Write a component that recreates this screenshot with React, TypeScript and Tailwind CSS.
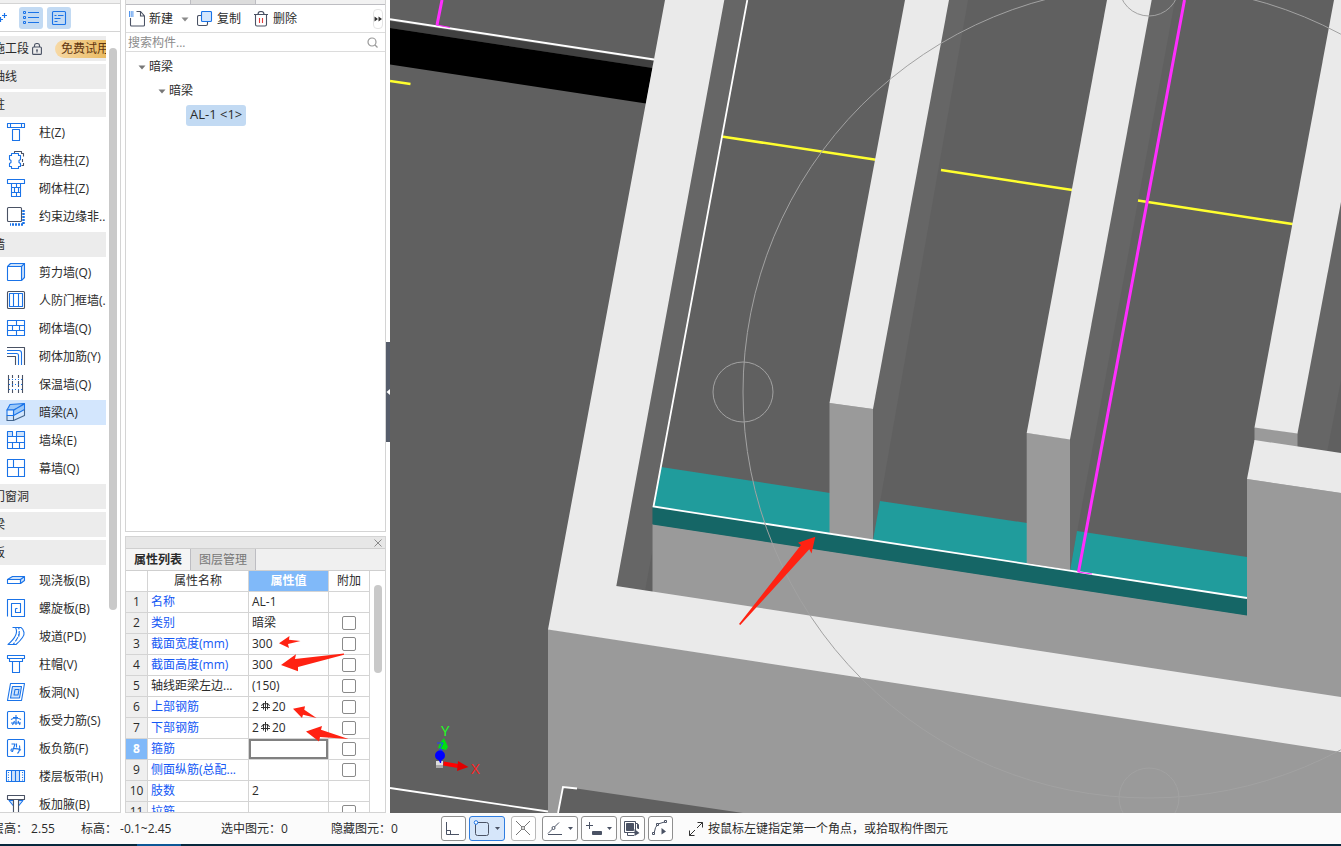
import React from 'react';
import clsx from 'clsx';

type IconName =
  | 'column' | 'tieColumn' | 'brickColumn' | 'edgeColumn'
  | 'shearWall' | 'doorFrameWall' | 'brickWall' | 'wallRebar' | 'insulation'
  | 'hiddenBeam' | 'buttress' | 'curtainWall'
  | 'slab' | 'spiralSlab' | 'ramp' | 'columnCap' | 'slabHole'
  | 'mainRebar' | 'negativeRebar' | 'slabStrip' | 'haunch';

type MenuRow = { label: string; icon?: IconName; badge?: string; active?: boolean };

const MENU: MenuRow[] = [
  { label: '施工段', badge: '免费试用' },
  { label: '轴线' },
  { label: '柱' },
  { label: '柱(Z)', icon: 'column' },
  { label: '构造柱(Z)', icon: 'tieColumn' },
  { label: '砌体柱(Z)', icon: 'brickColumn' },
  { label: '约束边缘非..', icon: 'edgeColumn' },
  { label: '墙' },
  { label: '剪力墙(Q)', icon: 'shearWall' },
  { label: '人防门框墙(.', icon: 'doorFrameWall' },
  { label: '砌体墙(Q)', icon: 'brickWall' },
  { label: '砌体加筋(Y)', icon: 'wallRebar' },
  { label: '保温墙(Q)', icon: 'insulation' },
  { label: '暗梁(A)', icon: 'hiddenBeam', active: true },
  { label: '墙垛(E)', icon: 'buttress' },
  { label: '幕墙(Q)', icon: 'curtainWall' },
  { label: '门窗洞' },
  { label: '梁' },
  { label: '板' },
  { label: '现浇板(B)', icon: 'slab' },
  { label: '螺旋板(B)', icon: 'spiralSlab' },
  { label: '坡道(PD)', icon: 'ramp' },
  { label: '柱帽(V)', icon: 'columnCap' },
  { label: '板洞(N)', icon: 'slabHole' },
  { label: '板受力筋(S)', icon: 'mainRebar' },
  { label: '板负筋(F)', icon: 'negativeRebar' },
  { label: '楼层板带(H)', icon: 'slabStrip' },
  { label: '板加腋(B)', icon: 'haunch' },
];

type PropRow = { name: string; value: string; check?: boolean; plain?: boolean; rebar?: boolean; editing?: boolean };

const PROPS: PropRow[] = [
  { name: '名称', value: 'AL-1' },
  { name: '类别', value: '暗梁', check: true },
  { name: '截面宽度(mm)', value: '300', check: true },
  { name: '截面高度(mm)', value: '300', check: true },
  { name: '轴线距梁左边...', value: '(150)', check: true, plain: true },
  { name: '上部钢筋', value: '20', check: true, rebar: true },
  { name: '下部钢筋', value: '20', check: true, rebar: true },
  { name: '箍筋', value: '', check: true, editing: true },
  { name: '侧面纵筋(总配...', value: '', check: true },
  { name: '肢数', value: '2' },
  { name: '拉筋', value: '', check: true },
];

const B = '#1a73e8';
const D = '#4a5264';
const L = '#cfe3fb';

const ICONS: Record<IconName, React.ReactNode> = {
  column: <path d="M.5 .5h17v4H.5z M3.500 1v3 M14.500 1v3 M5.500 6.500v11h7v-11z" />,
  tieColumn: (
    <>
      <path d="M7.500 2V.5h7v2h2v3 M15.500 8v3 M16.500 12v2.500h-2" stroke={D} />
      <path d="M4.500 2.500h7v2h2v4l-1.500 1v2l1.500 1v3h-2v2h-7v-2h-2v-3l1.500-1v-2l-1.500-1v-4h2z" />
    </>
  ),
  brickColumn: <path d="M.5 .5h17v4H.5z M4.500 4.500v13h9v-13 M4.500 8.500h9 M4.500 13.500h9 M9.500 5v3.500 M7.500 8.500v5 M11.500 8.500v5 M9.500 13.500v4" />,
  edgeColumn: (
    <>
      <path d="M16.500 3v14.500H3" strokeDasharray="2 1" strokeWidth="2.500" />
      <rect x=".5" y=".5" width="14" height="14" rx="1" fill="#fff" stroke={D} />
    </>
  ),
  shearWall: (
    <>
      <path d="M.5 3.500l3-3h14l-3 3z M14.500 3.500l3-3v14l-3 3z" fill={L} />
      <rect x=".5" y="3.500" width="14" height="14" rx=".5" fill="#fff" />
    </>
  ),
  doorFrameWall: (
    <>
      <rect x=".5" y=".5" width="17" height="17" rx="1" stroke={D} />
      <path d="M2.500 2.500h13v13h-13z M6.500 2.500v13 M11.500 2.500v13" />
    </>
  ),
  brickWall: <path d="M.5 1.500h17v15H.5z M.5 6.500h17 M.5 11.500h17 M9.500 1.500v5 M5.500 6.500v5 M12.500 6.500v5 M9.500 11.500v5" />,
  wallRebar: (
    <>
      <path d="M0 .5h17.500V18 M0 9.500h8.500V18" stroke={D} />
      <path d="M0 3.500h12q2.500 0 2.500 2.500v12 M0 6.500h9.500q2 0 2 2V18" />
    </>
  ),
  insulation: (
    <>
      <path d="M1.500 0v18 M15.500 0v18 M5.500 0v3 M5.500 6v6 M5.500 15v3 M11.500 0v3 M11.500 6v6 M11.500 15v3" stroke={D} />
      <path d="M2 4.500h13 M2 9.500h13 M2 14.500h13" strokeDasharray="1 2" />
    </>
  ),
  hiddenBeam: (
    <>
      <path d="M0 7L3 1.500 17.500 .5 7 7z M6.500 12.500V7l11-6v5.500z" fill="#9cc8f8" />
      <path d="M0 12.500V17.500h6.500l11-5v-6 M6.500 12.500v5" stroke="#44658c" />
      <path d="M0 7h6.500v5.500H0z" fill="#e6f1fd" />
    </>
  ),
  buttress: (
    <>
      <path d="M.5 .5h5v5h-5z M9.500 .5h8v5h-8z" fill={L} />
      <path d="M.5 5.500v12h17v-12z M.5 11.500h17 M9.500 5.500v6 M5.500 11.500v6 M12.500 11.500v6" />
    </>
  ),
  curtainWall: <path d="M.5 .5h17v17H.5z M.5 8.500h17 M6.500 .5v8 M11.500 8.500v9" />,
  slab: (
    <>
      <path d="M.5 8.500l5-3h12l-4 3z M13.500 8.500l4-3v4l-4 3z" fill={L} />
      <path d="M.5 8.500h13v4H.5z" />
    </>
  ),
  spiralSlab: (
    <>
      <path d="M.5 17.500V.5h17v17h-13V4.500h9v9h-5V9.500" />
      <path d="M8.500 9.500h2" />
    </>
  ),
  ramp: (
    <>
      <path d="M5.500 .5h3q4 7-7.500 17h8q9-8 8-12-1-4-3-5h-3" />
      <path d="M8.500 .5h3q3 7-5.500 17 M12 5q1 3-1 6" strokeDasharray="5 1.500" />
    </>
  ),
  columnCap: <path d="M.5 .5h17v3H.5z M2.500 3.500v3h13v-3 M5.500 6.500v11h7v-11" />,
  slabHole: (
    <>
      <path d="M3.500 .5h14l-3 17H.5z" />
      <path d="M5.500 3.500h9l-2 11.500H3.500z M8 6.500h4l-1 5.500H7z" fill={L} />
    </>
  ),
  mainRebar: (
    <>
      <rect x=".5" y=".5" width="17" height="17" rx="1" />
      <path d="M4 8.500q5-3 10 0 M4 12h10 M9 4v10 M6 6.500h5 M5.500 14l2-4 M13 14l-2-4" />
    </>
  ),
  negativeRebar: (
    <>
      <rect x=".5" y=".5" width="17" height="17" rx="1" />
      <path d="M4.500 5H8L5.500 12.500Q3 12 4.500 10q5-1 9.500 1 M12.500 6.500q1 5-2 8 M9.500 4.500v4" />
    </>
  ),
  slabStrip: (
    <>
      <rect x="5" y="3.500" width="8" height="11" fill={L} stroke="none" />
      <path d="M-.5 3.500h18v11h-18z M4.500 3.500v11 M8.500 3.500v11 M12.500 3.500v11" />
      <path d="M1.500 5v9 M15.500 5v9" strokeDasharray="1 1.500" />
    </>
  ),
  haunch: (
    <>
      <path d="M2 5.500h14L11.500 11v8h-5v-8z" fill={L} />
      <path d="M6.500 5h5v14h-5z" fill="#fff" stroke="none" />
      <path d="M.5 .5h17v4H.5z M6.500 5v14 M11.500 5v14" stroke={D} />
    </>
  ),
};

const MenuIcon = ({ name }: { name: IconName }) => (
  <svg width="18" height="18" viewBox="0 0 18 18" fill="none" stroke={B} strokeWidth="1.100" strokeLinejoin="round" className="mb-px shrink-0 overflow-visible">
    {ICONS[name]}
  </svg>
);

const Caret = ({ className }: { className?: string }) => (
  <svg width="8" height="5" viewBox="0 0 8 5" className={clsx('shrink-0', className)}>
    <path d="M0.500 .5h7L4 4.500z" fill="currentColor" />
  </svg>
);

const Sidebar = () => (
  <aside className="flex w-[121px] shrink-0 flex-col overflow-hidden border-r border-b border-[#d4d4d4] bg-white">
    <div className="h-1 shrink-0 border-b border-[#d4d4d4] bg-[#f0f0f0]" />
    <div className="flex h-7 shrink-0 items-center gap-1 border-b border-[#d4d4d4]">
      <button aria-label="添加" className="flex w-[15px]">
        <svg width="8" height="14" viewBox="0 0 8 14" fill="none" stroke={B} strokeWidth="1.200">
          <path d="M0 8.500h3 M4.500 2v5 M2 4.500h5 M.5 6v5" />
        </svg>
      </button>
      <button aria-label="列表视图" className="flex h-[22px] w-6 items-center justify-center rounded-[3px] bg-[#c2daf3]">
        <svg width="16" height="14" viewBox="0 0 16 14" fill="none" stroke={B}>
          <path d="M.5 .5h2v2h-2z M.5 5.500h2v2h-2z M.5 10.500h2v2h-2z M5 1.500h11 M5 6.500h11 M5 11.500h11" />
        </svg>
      </button>
      <button aria-label="详情视图" className="flex h-[22px] w-6 items-center justify-center rounded-[3px] bg-[#c2daf3]">
        <svg width="16" height="16" viewBox="0 0 16 16" fill="none" stroke={B} strokeWidth="1.100">
          <rect x="1.500" y="1.500" width="13" height="13" rx="1" />
          <path d="M3.500 5.500h2 M7 5.500h5.500 M3.500 8.500h6 M3.500 11.500h3" />
        </svg>
      </button>
    </div>
    <div className="flex min-h-0 flex-1">
      <ul className="flex flex-1 flex-col gap-[3px] overflow-hidden pt-1">
        {MENU.map((row) =>
          row.icon ? (
            <li key={row.label} className="shrink-0">
              <a href="#" className={clsx('flex h-[25px] items-center gap-[14px] overflow-hidden pl-[7px] whitespace-nowrap', row.active && 'bg-[#d3e6fd]')}>
                <MenuIcon name={row.icon} />
                <span>{row.label}</span>
              </a>
            </li>
          ) : (
            <li key={row.label} className="flex h-[25px] shrink-0 items-center overflow-hidden bg-[#ececec] whitespace-nowrap">
              <span className="-ml-[7px]">{row.label}</span>
              {row.badge && (
                <>
                  <svg width="10" height="12" viewBox="0 0 10 12" fill="none" stroke={D} strokeWidth="1.100" className="mx-[3px] shrink-0">
                    <rect x=".6" y="4" width="8.800" height="7.400" rx="1" />
                    <path d="M2.500 4V2.500q0-2 2.500-2t2.500 2V4 M5 6.500v3 M4 7h2" />
                  </svg>
                  <span className="ml-[10px] rounded-l-full bg-gradient-to-r from-[#f7d9a5] to-[#e9b95c] py-px pl-[6px] text-[#5f3510]">{row.badge}</span>
                </>
              )}
            </li>
          ),
        )}
      </ul>
      <div className="mx-[3px] mt-4 h-[72%] w-2 rounded-full bg-[#c9c9c9]" />
    </div>
  </aside>
);

const ComponentTree = () => (
  <section className="flex min-h-0 flex-1 flex-col border border-t-0 border-[#d4d4d4] bg-white">
    <div className="flex h-[5px] shrink-0 border-b border-[#bdbdc2] bg-[#f2f2f2]">
      <div className="w-[65px] border-r border-[#bdbdc2] bg-[#f0f0f0]" />
      <div className="w-[65px] border-r border-[#bdbdc2] bg-[#dcdcdc]" />
    </div>
    <div className="flex h-7 shrink-0 items-center border-b border-[#dcdcdc] pt-px pr-[2px] pl-[3px]">
      <button className="flex items-center gap-1">
        <svg width="16" height="16" viewBox="0 0 16 16" fill="none" stroke={D} strokeWidth="1.100">
          <path d="M1.500 7v7q0 1 1 1h12q1 0 1-1V5L11.500 .5H7.500 M11.500 .5v4.500h4" />
          <path d="M0 1h5 M0 3h5 M0 5h5" stroke={B} strokeWidth="1.400" strokeDasharray="1 .7" />
        </svg>
        新建
        <Caret className="ml-1 text-[#8a8a8a]" />
      </button>
      <button className="ml-2 flex items-center gap-1">
        <svg width="16" height="16" viewBox="0 0 16 16" fill="none" stroke={D} strokeWidth="1.100">
          <rect x=".5" y="4.500" width="10" height="10" rx="1.500" />
          <rect x="4.500" y=".5" width="10" height="10" rx="1" fill="#d3e6fd" stroke={B} />
        </svg>
        复制
      </button>
      <button className="ml-[13px] flex items-center gap-[5px]">
        <svg width="14" height="16" viewBox="0 0 14 16" fill="none" stroke={D} strokeWidth="1.100">
          <path d="M0 3.500h14 M4 3.500q0-3 3-3t3 3 M1.500 3.500v10q0 1.500 1.500 1.500h8q1.500 0 1.500-1.500v-10" />
          <path d="M5.500 7v5 M8.500 7v5" stroke="#e03b3b" />
        </svg>
        删除
      </button>
      <button aria-label="更多" className="ml-auto flex h-5 w-[10px] shrink-0 items-center justify-center rounded-sm border border-[#e4e4e4]">
        <svg width="8" height="6" viewBox="0 0 8 6" fill="#333" className="shrink-0">
          <path d="M0.500 .5v5L4 3z M4.500 .5v5L8 3z" />
        </svg>
      </button>
    </div>
    <label className="flex h-[19px] shrink-0 items-center border-b border-[#dcdcdc] pt-px pr-[7px] pl-[2px]">
      <input aria-label="搜索构件" placeholder="搜索构件..." className="w-full min-w-0 flex-1 outline-none placeholder:text-[#8c8c8c]" />
      <svg width="11" height="11" viewBox="0 0 11 11" fill="none" stroke="#999" strokeWidth="1.200">
        <circle cx="5" cy="5" r="4" />
        <path d="M8 8l2.500 2.500" />
      </svg>
    </label>
    <div className="pt-[3px]">
      <div className="flex h-6 items-center gap-[3px] pl-3"><Caret className="text-[#777]" />暗梁</div>
      <div className="flex h-6 items-center gap-[3px] pl-8"><Caret className="text-[#777]" />暗梁</div>
      <div className="flex h-6 items-center pl-[60px]">
        <button className="flex h-[21px] items-center rounded-[3px] bg-[#c2daf3] px-1 text-[13px]">AL-1 &lt;1&gt;</button>
      </div>
    </div>
  </section>
);

const RebarMark = () => (
  <svg width="9" height="10" viewBox="0 0 9 10" fill="none" stroke="#333" strokeWidth="1" className="mx-[2px] mb-1 inline-block">
    <path d="M4.500 0v10 M0 6.500h9 M2.500 2v6.500 M6.500 2v6.500 M.5 5Q.5 2.500 4.500 2.500T8.500 5" />
  </svg>
);

const RedArrows = () => (
  <svg className="pointer-events-none absolute top-0 left-0 h-[240px] w-[243px]" viewBox="126 571 243 240" fill="#ff2212">
    <path d="M279 643.300L289.500 636 289 639.700 300.500 641 288 644 289 648z" />
    <path d="M281 665L296 654.300 295 659 344 653.500 344 654.700 298 667 298 671.300z" />
    <path d="M293 708.700L305 706.300 304.300 709.700 316.500 718 303 714.700 302 718z" />
    <path d="M306 731.500L322 726 321 729.800 348.500 739 320 737 319 741.500z" />
  </svg>
);

const PropertyPanel = () => (
  <section className="mt-1 flex h-[277px] shrink-0 flex-col overflow-hidden border border-[#d4d4d4] bg-white">
    <div className="flex h-[11px] shrink-0 items-center justify-end bg-[#e7e7e7] pr-[3px]">
      <button aria-label="关闭">
        <svg width="8" height="8" viewBox="0 0 8 8" stroke="#8a8a8a" className="block">
          <path d="M.5 .5l7 7 M7.500 .5l-7 7" />
        </svg>
      </button>
    </div>
    <div className="flex h-[23px] shrink-0 border-y border-[#cfcfcf] bg-[#f0f0f0]">
      <button className="w-[65px] border-r border-[#bdbdc2] bg-[#f5f5f5] font-bold">属性列表</button>
      <button className="w-[65px] border-r border-[#bdbdc2] bg-[#e0e0e0] text-[#777]">图层管理</button>
    </div>
    <div className="relative flex min-h-0 flex-1">
      <table className="w-[244px] shrink-0 table-fixed border-separate border-spacing-0 self-start">
        <colgroup>
          <col className="w-[22px]" />
          <col className="w-[101px]" />
          <col className="w-[80px]" />
          <col className="w-[41px]" />
        </colgroup>
        <thead>
          <tr className="h-[21px] [&>th]:border-r [&>th]:border-b [&>th]:border-[#d4d4d4] [&>th]:p-0">
            <th aria-label="序号" />
            <th className="font-normal">属性名称</th>
            <th className="bg-[#80b9f9] text-white">属性值</th>
            <th className="font-normal">附加</th>
          </tr>
        </thead>
        <tbody>
          {PROPS.map((row, i) => (
            <tr key={row.name} className="h-[21px] [&>td]:border-r [&>td]:border-b [&>td]:border-[#d4d4d4] [&>td]:p-0">
              <td className={clsx('text-center', row.editing ? 'bg-[#80b9f9] font-bold text-white' : 'bg-[#efefef]')}>{i + 1}</td>
              <td className="overflow-hidden whitespace-nowrap">
                <span className={clsx('block pl-[3px] leading-5', !row.plain && 'text-[#1458f5]')}>{row.name}</span>
              </td>
              <td>
                {row.editing ? (
                  <input aria-label={row.name} className="block h-5 w-full border-2 border-[#808080] bg-white px-px outline-none" />
                ) : (
                  <span className="block h-5 pl-[3px] leading-5">
                    {row.rebar && <>2<RebarMark /></>}
                    {row.value}
                  </span>
                )}
              </td>
              <td>
                {row.check && (
                  <input type="checkbox" aria-label={`${row.name}附加`} className="mx-auto block size-[14px] appearance-none rounded-[2px] border border-[#8a8a8a] bg-white" />
                )}
              </td>
            </tr>
          ))}
        </tbody>
      </table>
      <div className="mt-[14px] ml-1 h-[88px] w-2 rounded-full bg-[#c9c9c9]" />
      <RedArrows />
    </div>
  </section>
);

const Scene = () => (
  <svg className="block h-full w-full" viewBox="390 0 951 813" preserveAspectRatio="xMinYMin slice">
    <rect x="390" y="0" width="951" height="813" fill="#606060" />

    {/* slab edge on the far left */}
    <path d="M390 21L654 61 652 68 390 28z" fill="#404040" />
    <path d="M390 28L652.500 68 646 103.500 390 64.500z" fill="#000" />
    <path d="M390 19.300L654 59.500" stroke="#fff" strokeWidth="2" />

    {/* shaded inner wall sides */}
    <g fill="#666">
      <path d="M724 0H747L652.500 506V550L645 591 616 587z" />
      <path d="M949 0H968L880 502 873 540V409z" />
      <path d="M1151 0H1175L1077 532 1070 570V439z" />
      <path d="M1341 202V380L1327 452 1297 447V433z" />
    </g>

    {/* grid axes */}
    <g stroke="#ffff2e" strokeWidth="2.500">
      <path d="M390 81L410.500 84 M721.500 136.500L876 159.700 M941 170L1074 190.300 M1138 200.500L1294 224.300" />
    </g>

    {/* wall front faces */}
    <g fill="#9a9a9a">
      <path d="M652.500 524L1247 615V479L1341 493V699L652.500 593z" />
      <path d="M548 629L1341 750V813H548z" />
      <path d="M1254.500 427L1297.500 433V448L1254.500 441z" />
    </g>

    {/* hidden beam */}
    <g fill="#209c9c">
      <path d="M661 467L830 493V534L653 506z" />
      <path d="M880 501L1027 523V564L873 540z" />
      <path d="M1077 531L1247 557V598L1070 571z" />
    </g>
    <path d="M652.500 506L1247 598V615.500L652.500 524.500z" fill="#156666" />

    <g fill="#9a9a9a">
      <path d="M829.500 403L873 409V540L829.500 533z" />
      <path d="M1026.700 433L1070 439V570L1026.700 563z" />
    </g>

    {/* wall tops */}
    <g fill="#eaeaea">
      <path d="M665 0H724.300L616.300 586 1341 697V752L548 629.500z" />
      <path d="M905 0H949L873 409 829.500 403z" />
      <path d="M1107 0H1151.700L1070 439.500 1026.700 433z" />
      <path d="M1334 0H1341V202L1297.500 433.500 1254.500 427.500z" />
      <path d="M1254.500 440L1341 453V493L1247 479z" />
    </g>

    <path d="M747.300 0L653.500 506.500 1247 598" fill="none" stroke="#fff" strokeWidth="1.800" />
    <path d="M1184.500 0L1078.500 572 1092 574 M442 0L437 25 450 27.500" fill="none" stroke="#ff2eff" strokeWidth="1.200" />
    <path d="M1184.500 0L1078.500 572 M442 0L437 25" stroke="#ff2eff" strokeWidth="3" />

    {/* floor outline at the bottom */}
    <path d="M558 813L563 786.500 743 813z" fill="#606060" />
    <path d="M390 788L548 811.500 M558 813L563 787 577 788.500" fill="none" stroke="#fff" strokeWidth="1.800" />

    {/* orbit guide */}
    <g fill="none" stroke="#a2a2a2">
      <circle cx="1149" cy="392" r="406" />
      <circle cx="743" cy="392" r="30" />
      <circle cx="1149" cy="-14" r="30" />
      <circle cx="1149" cy="798" r="30" />
    </g>

    <path d="M815.300 536.700L798 542.700 801 545 739 624 740.300 625 809.300 549.300 811.500 553.500z" fill="#ff2212" />

    {/* axis gizmo */}
    <path d="M436 761h7v5h-7z" fill="#ddd" />
    <path d="M436 765h7v3h-7z" fill="#aaa" />
    <path d="M441 752L443 742" stroke="#1f3bff" strokeWidth="2" />
    <path d="M444 738L448 747 446 750 438 748 440 743z" fill="#00e010" />
    <path d="M437 743h6L439 751" fill="none" stroke="#2040ff" />
    <circle cx="440" cy="755.500" r="5" fill="#00f" />
    <path d="M438 758h4l-1 5h-1z" fill="#00f" />
    <path d="M443.500 763.500L458 766" stroke="#f00" strokeWidth="4" />
    <path d="M458 761L468.500 767 457 771z" fill="#e00000" />
    <text x="441" y="736" fontSize="15" fill="#22ff22">Y</text>
    <text x="471" y="774" fontSize="15" fill="#ff2020">X</text>
  </svg>
);

const ToolButton = ({ label, active, wide, muted, children }: {
  label: string; active?: boolean; wide?: boolean; muted?: boolean; children: React.ReactNode;
}) => (
  <button
    aria-label={label}
    className={clsx(
      'flex h-[25px] shrink-0 items-center justify-center rounded-[3px] border pr-px pb-px',
      wide ? 'w-9 gap-1' : 'w-[25px]',
      active ? 'border-[#2f7de0] bg-[#d6e6fa]' : muted ? 'border-[#b8b8b8] bg-white' : 'border-[#8f8f8f] bg-white',
    )}
  >
    <svg width="18" height="18" viewBox="0 0 18 18" fill="none" stroke={D} className="shrink-0">
      {children}
    </svg>
    {wide && (
      <svg width="5" height="3" viewBox="0 0 5 3" className="shrink-0">
        <path d="M0 0h5L2.500 3z" fill={D} />
      </svg>
    )}
  </button>
);

const StatusBar = () => (
  <footer className="shrink-0">
    <div className="flex h-[31px] items-center overflow-hidden bg-[#fbfbfb] whitespace-nowrap">
      <span className="-ml-2 w-[89px] shrink-0">层高：&nbsp;2.55</span>
      <span className="w-[140px] shrink-0">标高：&nbsp;-0.1~2.45</span>
      <span className="w-[110px] shrink-0">选中图元：0</span>
      <span className="w-[110px] shrink-0">隐藏图元：0</span>
      <div className="flex shrink-0 items-center gap-[3px]">
        <ToolButton label="正交">
          <path d="M2.500 3v12.500H15 M2.500 11.500h4v4" />
        </ToolButton>
        <ToolButton label="捕捉" active wide>
          <rect x="2.500" y="3.500" width="13" height="13" rx="2" />
          <circle cx="3" cy="3.500" r="1.800" fill="#fff" stroke={B} />
        </ToolButton>
        <div className="mx-[3px] flex">
          <ToolButton label="交点" muted>
            <path d="M2 2l14 14 M16 2L2 16" stroke="#777" />
            <circle cx="9" cy="9" r="1.500" stroke="#777" fill="#fff" />
          </ToolButton>
        </div>
        <ToolButton label="角度" wide>
          <path d="M2 15.500h14 M2 14.500L13 3.500" />
          <circle cx="7.500" cy="9" r="1.500" fill="#fff" />
        </ToolButton>
        <ToolButton label="偏移" wide>
          <path d="M1 6.500h7 M4.500 3v7" />
          <path d="M7.500 12.500h9v3h-9z" fill={D} />
        </ToolButton>
        <ToolButton label="选择">
          <path d="M3.500 4.500h7v7h-7z" fill={D} />
          <path d="M1.500 2.500h11v11h-11z M14 5.500h1.500V10 M4.500 14v2.500H11 M13 4.500h1.500v5" />
          <path d="M11.500 10v7l5-3z" fill={D} stroke="none" />
        </ToolButton>
        <ToolButton label="折线">
          <path d="M3 14.500q1-7 4-9.500l8-2.500" />
          <path d="M1.500 13.500h2v2h-2z M5.500 4.500h2v2h-2z M13.500 1.500h2v2h-2z" fill="#fff" />
          <path d="M10.500 9v6.500l4.500-3z" fill={D} stroke="none" />
        </ToolButton>
      </div>
      <svg width="16" height="16" viewBox="0 0 16 16" fill="none" stroke="#333" className="ml-[15px] shrink-0">
        <path d="M1.500 14.500L7 9 M9 7l5.500-5.500 M9.500 1.500h5v5 M1.500 9.500v5h5" />
      </svg>
      <span className="ml-1">按鼠标左键指定第一个角点，或拾取构件图元</span>
    </div>
    <div className="h-[2px] bg-[#06283d]">
      <div className="ml-[137px] h-full w-11 bg-[#0c5796]" />
    </div>
  </footer>
);

export default function App() {
  return (
    <div className="flex h-screen flex-col overflow-hidden bg-white font-['Open_Sans','Noto_Sans_CJK_SC',sans-serif] text-xs text-[#2b2b2b]">
      <main className="flex min-h-0 flex-1">
        <Sidebar />
        <div className="ml-1 flex w-[261px] shrink-0 flex-col">
          <ComponentTree />
          <PropertyPanel />
        </div>
        <div className="w-1 shrink-0 pt-[342px]">
          <button aria-label="收起面板" className="flex h-[100px] w-1 items-center justify-center bg-[#565d6b]">
            <svg width="4" height="6" viewBox="0 0 4 6" className="shrink-0">
              <path d="M4 0v6L.5 3z" fill="#fff" />
            </svg>
          </button>
        </div>
        <div className="min-w-0 flex-1 overflow-hidden bg-[#606060]">
          <Scene />
        </div>
      </main>
      <StatusBar />
    </div>
  );
}
